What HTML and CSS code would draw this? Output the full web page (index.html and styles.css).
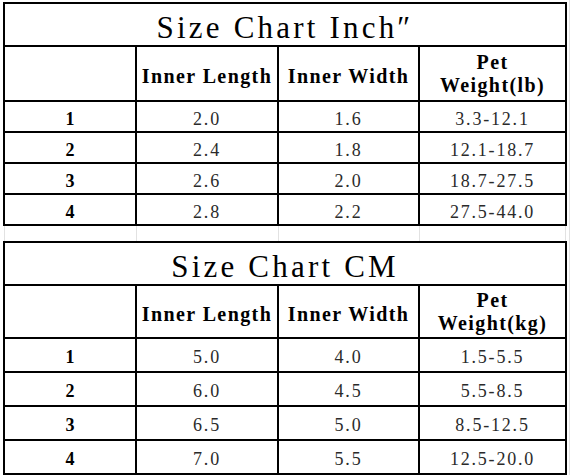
FILE: index.html
```html
<!DOCTYPE html>
<html>
<head>
<meta charset="utf-8">
<link rel="stylesheet" href="styles.css">
</head>
<body>
<div class="sheet">
  <table class="chart chart-inch">
    <colgroup><col class="c1"><col class="c2"><col class="c3"><col class="c4"></colgroup>
    <tr class="title-row"><td colspan="4" class="title">Size Chart Inch″</td></tr>
    <tr class="head-row">
      <td></td>
      <td class="head">Inner Length</td>
      <td class="head">Inner Width</td>
      <td class="head head-two">Pet<br>Weight(lb)</td>
    </tr>
    <tr class="data-row"><td class="num">1</td><td>2.0</td><td>1.6</td><td>3.3-12.1</td></tr>
    <tr class="data-row"><td class="num">2</td><td>2.4</td><td>1.8</td><td>12.1-18.7</td></tr>
    <tr class="data-row"><td class="num">3</td><td>2.6</td><td>2.0</td><td>18.7-27.5</td></tr>
    <tr class="data-row"><td class="num">4</td><td>2.8</td><td>2.2</td><td>27.5-44.0</td></tr>
  </table>
  <div class="gap"><span></span><span></span><span></span><span></span></div>
  <table class="chart chart-cm">
    <colgroup><col class="c1"><col class="c2"><col class="c3"><col class="c4"></colgroup>
    <tr class="title-row"><td colspan="4" class="title">Size Chart CM</td></tr>
    <tr class="head-row">
      <td></td>
      <td class="head">Inner Length</td>
      <td class="head">Inner Width</td>
      <td class="head head-two">Pet<br>Weight(kg)</td>
    </tr>
    <tr class="data-row"><td class="num">1</td><td>5.0</td><td>4.0</td><td>1.5-5.5</td></tr>
    <tr class="data-row"><td class="num">2</td><td>6.0</td><td>4.5</td><td>5.5-8.5</td></tr>
    <tr class="data-row"><td class="num">3</td><td>6.5</td><td>5.0</td><td>8.5-12.5</td></tr>
    <tr class="data-row"><td class="num">4</td><td>7.0</td><td>5.5</td><td>12.5-20.0</td></tr>
  </table>
</div>
</body>
</html>
```
FILE: styles.css
```css
html, body {
  margin: 0;
  padding: 0;
  background: #ffffff;
}

.sheet {
  width: 572px;
  height: 475px;
  padding: 2px 0 0 3px;
  box-sizing: border-box;
  background-image:
    linear-gradient(to right, transparent 569px, #e2e2e2 569px, #e2e2e2 570px, transparent 570px);
}

.chart {
  border-collapse: collapse;
  table-layout: fixed;
  width: 564px;
  font-family: "Liberation Serif", "DejaVu Serif", serif;
  color: #2a2a2a;
}

.c1 { width: 132px; }
.c2 { width: 142px; }
.c3 { width: 141px; }
.c4 { width: 147px; }

.chart td {
  border: 2px solid #000;
  padding: 0;
  text-align: center;
  vertical-align: middle;
  font-size: 18px;
  letter-spacing: 1.8px;
  line-height: 20px;
  padding-top: 4px;
}

.chart td.title {
  font-size: 31px;
  letter-spacing: 3.2px;
  line-height: 34px;
  color: #000;
  padding-top: 7px;
}

.chart td.head {
  font-weight: bold;
  font-size: 20px;
  letter-spacing: 1.4px;
  line-height: 22px;
  color: #000;
}

.chart td.head-two {
  line-height: 23px;
  padding-top: 0;
}

.chart td.num {
  font-weight: bold;
  font-size: 18px;
  letter-spacing: 0;
  color: #000;
}

.chart-inch .title-row td { height: 33px; }
.chart-inch .head-row td { height: 49px; }
.chart-inch .data-row td { height: 25px; }

.chart-cm .title-row td { height: 34px; }
.chart-cm .head-row td { height: 47px; }
.chart-cm .data-row td { height: 28px; }

.gap {
  display: grid;
  grid-template-columns: 132px 142px 141px 147px;
  height: 15px;
  margin-left: 1px;
}

.gap span {
  border-left: 1px solid #e2e2e2;
}

.gap span:last-child {
  border-right: 1px solid #e2e2e2;
}
```
